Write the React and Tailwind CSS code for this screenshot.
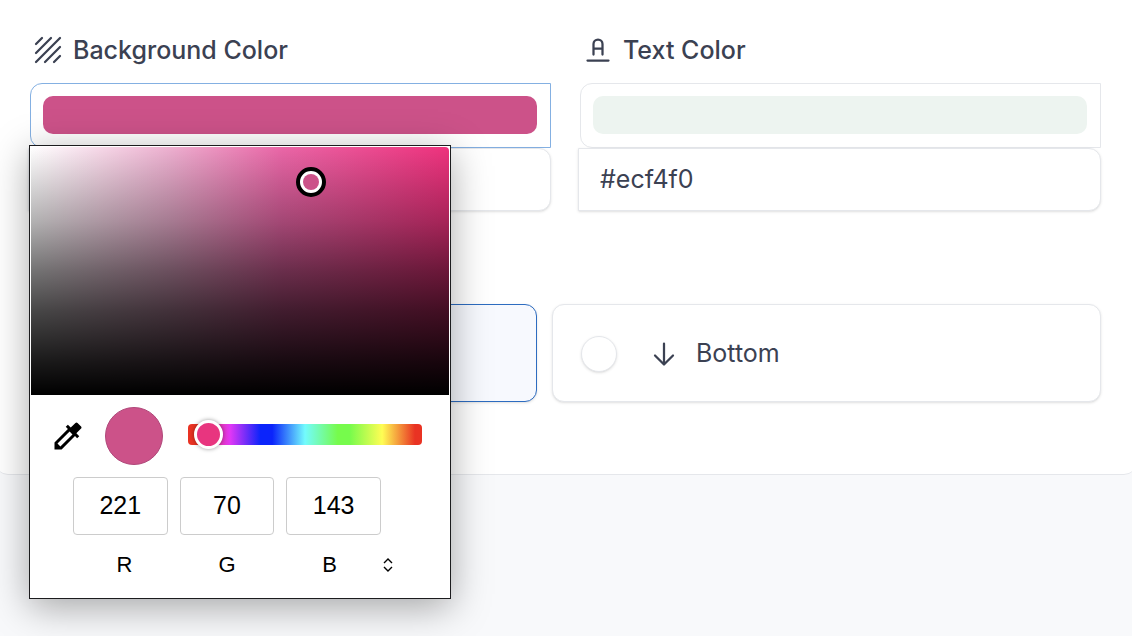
import React, { useState } from "react";

function LineIcon({ children }) {
  return (
    <svg
      aria-hidden="true"
      viewBox="0 0 24 24"
      className="size-9 shrink-0"
      fill="none"
      stroke="currentColor"
      strokeWidth="1.5"
      strokeLinecap="round"
      strokeLinejoin="round"
    >
      {children}
    </svg>
  );
}

function ColorField({ id, title, icon, swatch, value, active, children }) {
  const [text, setText] = useState(value);
  return (
    <div className="relative min-w-0">
      <label htmlFor={id} className="mb-[15px] flex h-9 items-center gap-[7px] text-[25px] font-medium">
        {icon}
        <span className="pt-0.5">{title}</span>
      </label>
      <button
        type="button"
        aria-label={title + " swatch"}
        className={
          "flex h-[65px] w-full items-start rounded-l-xl border bg-white p-3 pr-[13px] " +
          (active ? "border-[#84b0e2]" : "border-[#e5e7eb]")
        }
      >
        <span className={"h-[38px] flex-1 rounded-[10px] " + swatch} />
      </button>
      <div className="-ml-0.5">
        <input
          id={id}
          value={text}
          onChange={(e) => setText(e.target.value)}
          className="block h-[63px] w-full rounded-r-xl border border-[#e5e7eb] bg-white px-[21px] pb-0.5 text-[25px] shadow-sm outline-none"
        />
      </div>
      {children}
    </div>
  );
}

const channels = [
  { id: "red", label: "R", value: 221 },
  { id: "green", label: "G", value: 70 },
  { id: "blue", label: "B", value: 143 },
];

function ColorPicker() {
  const [hue, setHue] = useState(11);
  return (
    <div
      role="dialog"
      aria-label="Color picker"
      className="absolute -left-px top-[113px] z-10 w-[422px] border border-[#1c1c1e] bg-white p-px pb-[15px] font-['Liberation_Sans',Arial,sans-serif] text-black shadow-[0_8px_36px_rgba(0,0,0,0.34)]"
    >
      <div className="relative h-[248px] rounded-t-sm bg-[linear-gradient(to_top,#000,rgba(0,0,0,0.9)_13%,rgba(0,0,0,0.72)_34%,rgba(0,0,0,0.55)_50%,rgba(0,0,0,0.3)_70%,transparent),linear-gradient(to_right,#fff,#edb0d0_33%,#ea66a7_60%,#ee327d)]">
        <span className="absolute left-[67%] top-[14%] size-[30px] -translate-x-1/2 -translate-y-1/2 rounded-full border-4 border-black bg-white p-[3px]">
          <span className="block size-full rounded-full bg-[#cc5289]" />
        </span>
      </div>
      <div className="flex items-center pl-[19px] pr-[27px] pt-3">
        <button type="button" aria-label="Pick a color from the screen">
          <svg viewBox="0 0 24 24" className="size-9" fill="currentColor" aria-hidden="true">
            <path d="M20.71 5.63l-2.34-2.34a1 1 0 0 0-1.41 0l-3.12 3.12-1.93-1.91-1.41 1.41 1.42 1.42L3 16.25V21h4.75l8.92-8.92 1.42 1.42 1.41-1.41-1.92-1.92 3.12-3.12c.4-.4.4-1.03.01-1.42zM6.92 19L5 17.08l8.06-8.06 1.92 1.92L6.92 19z" />
          </svg>
        </button>
        <span className="ml-[19px] size-[58px] shrink-0 rounded-full border border-[#b0487a] bg-[#cc5289]" />
        <input
          type="range"
          aria-label="Hue"
          min="0"
          max="360"
          value={hue}
          onChange={(e) => setHue(e.target.value)}
          className="mb-1 ml-[25px] h-[30px] min-w-0 flex-1 appearance-none bg-transparent outline-none [&::-webkit-slider-runnable-track]:h-[21px] [&::-webkit-slider-runnable-track]:rounded [&::-webkit-slider-runnable-track]:bg-[linear-gradient(to_right,#e93323,#e93323_4%,#e137f5_18%,#0b24fb_31%,#0b24fb_36%,#73fbfd_50%,#76fb4c_64%,#76fb4c_69%,#fffd54_83%,#e93323_97%)] [&::-webkit-slider-thumb]:-mt-1 [&::-webkit-slider-thumb]:size-[29px] [&::-webkit-slider-thumb]:appearance-none [&::-webkit-slider-thumb]:rounded-full [&::-webkit-slider-thumb]:border-3 [&::-webkit-slider-thumb]:border-white [&::-webkit-slider-thumb]:bg-[#e8357f] [&::-webkit-slider-thumb]:shadow-[0_0_4px_rgba(0,0,0,0.4)]"
        />
      </div>
      <div className="relative pl-[42px] pr-[68px] pt-3">
        <div className="flex gap-3">
          {channels.map((c) => (
            <input
              key={c.id}
              id={c.id}
              defaultValue={c.value}
              className="h-[58px] min-w-0 flex-1 rounded border border-[#cccccc] bg-white pb-0.5 text-center text-[25px] outline-none"
            />
          ))}
        </div>
        <div className="mt-3 flex text-center text-[22px] leading-9">
          {channels.map((c) => (
            <label key={c.id} htmlFor={c.id} className="flex-1">
              {c.label}
            </label>
          ))}
        </div>
        <button
          type="button"
          aria-label="Change color format"
          className="absolute bottom-2.5 right-[53px] flex h-4 w-4 items-center justify-center"
        >
          <svg
            viewBox="0 0 10 14"
            className="h-3.5 w-2.5"
            fill="none"
            stroke="currentColor"
            strokeWidth="1.4"
            aria-hidden="true"
          >
            <path d="M1 5l4-4 4 4M1 9l4 4 4-4" />
          </svg>
        </button>
      </div>
    </div>
  );
}

export default function App() {
  return (
    <div className="min-h-screen overflow-hidden bg-[#f8f9fb] font-[Inter,sans-serif] text-[#3b4152]">
      <main className="-mx-1 rounded-b-xl border-b border-[#e5e7eb] bg-white pb-[72px] pl-[34px] pr-[35px] pt-8">
        <form onSubmit={(e) => e.preventDefault()}>
          <div className="grid grid-cols-2 gap-[29px]">
            <ColorField
              id="background-color"
              title="Background Color"
              value="#dd468f"
              swatch="bg-[#cc5289]"
              active
              icon={
                <LineIcon>
                  <path d="M4 8l4-4M14 4L4 14M4 20L20 4M20 10L10 20M20 16l-4 4" />
                </LineIcon>
              }
            >
              <ColorPicker />
            </ColorField>
            <ColorField
              id="text-color"
              title="Text Color"
              value="#ecf4f0"
              swatch="bg-[#edf4f0]"
              icon={
                <LineIcon>
                  <path d="M9 15V8a3 3 0 0 1 6 0v7M9 11h6M5 19h14" />
                </LineIcon>
              }
            />
          </div>
          <div className="mt-[93px] grid grid-cols-[507fr_549fr] gap-[15px]">
            <label className="flex h-[98px] items-center rounded-xl border border-[#2d6cc0] bg-[#f7f9fe] px-7 shadow-sm">
              <input
                type="radio"
                name="position"
                aria-label="Top"
                defaultChecked
                className="size-9 appearance-none rounded-full border-[10px] border-[#2d6cc0]"
              />
            </label>
            <label className="flex h-[98px] items-center rounded-xl border border-[#e5e7eb] bg-white px-7 pt-0.5 text-[25px] shadow-sm">
              <input
                type="radio"
                name="position"
                className="mr-[29px] size-9 appearance-none rounded-full border border-[#e5e7eb] bg-white shadow-sm"
              />
              <LineIcon>
                <path d="M12 5v14M18 13l-6 6M6 13l6 6" />
              </LineIcon>
              <span className="ml-3.5">Bottom</span>
            </label>
          </div>
        </form>
      </main>
    </div>
  );
}
